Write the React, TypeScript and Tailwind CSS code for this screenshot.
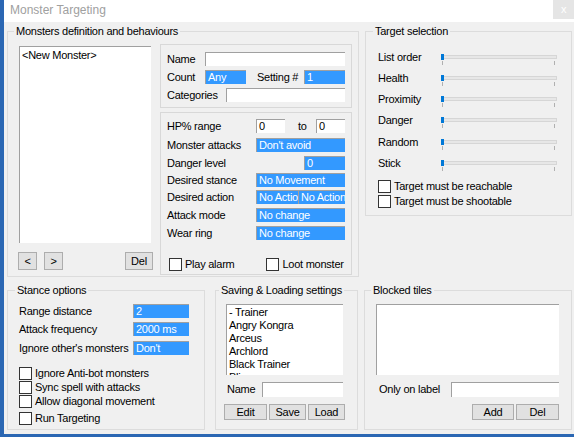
import React from 'react';

const Check: React.FC<{ label: string; className?: string }> = ({ label, className = '' }) => (
  <div className={`flex items-center ${className}`}>
    <span className="w-[13px] h-[13px] border border-[#333333] bg-white shrink-0" />
    <span className="ml-[3px] whitespace-nowrap">{label}</span>
  </div>
);

const Field: React.FC<{ w: string; children?: React.ReactNode; h?: string }> = ({ w, children, h = 'h-[14px]' }) => (
  <div className={`${w} ${h} bg-white border-t border-l border-[#a0a0a0] pl-[2px] leading-[13px] overflow-hidden whitespace-nowrap`}>
    {children}
  </div>
);

const Blue: React.FC<{ w: string; children?: React.ReactNode }> = ({ w, children }) => (
  <div className={`${w} h-[14px] bg-[#3399ff] text-white border-t border-l border-[#a0a0a0] pl-[2px] leading-[13px] overflow-hidden whitespace-nowrap shrink-0`}>
    {children}
  </div>
);

const Btn: React.FC<{ w: string; h?: string; children: React.ReactNode; className?: string }> = ({ w, h = 'h-[16px]', children, className = '' }) => (
  <div className={`${w} ${h} bg-[#e1e1e1] border border-[#adadad] flex items-center justify-center shrink-0 ${className}`}>
    {children}
  </div>
);

const Slider: React.FC<{ label: string; className?: string }> = ({ label, className = '' }) => (
  <div className={`h-[21px] flex items-center ${className}`}>
    <span className="w-[63px]">{label}</span>
    <div className="relative w-[116px] h-[12px] mt-[5px]">
      <div className="absolute left-0 right-0 top-[1px] h-[4px] bg-[#e7e7e7] border border-[#d6d6d6]" />
      <div className="absolute left-[0px] top-0 w-[3px] h-[6px] bg-[#0078d7]" />
      <div className="absolute left-[1px] top-[7px] w-px h-[4px] bg-[#b0b0b0]" />
      <div className="absolute right-[2px] top-[7px] w-px h-[4px] bg-[#b0b0b0]" />
    </div>
  </div>
);

const items = ['- Trainer', 'Angry Kongra', 'Arceus', 'Archlord', 'Black Trainer', 'Blissey'];

export default function App() {
  return (
    <div className="w-[574px] h-[437px] bg-[#2b67b3] flex overflow-hidden font-['Liberation_Sans',sans-serif] text-[11px] tracking-[-0.25px] text-black">
      <div className="ml-[4px] w-[570px] h-[434px] bg-[#f0f0f0] flex flex-col">
        <div className="h-[22px] bg-white flex items-start justify-between shrink-0">
          <span className="pl-[6px] pt-[3px] text-[12px] tracking-normal text-[#a0a0a0] leading-[15px]">Monster Targeting</span>
          <div className="w-[21px] h-[19px] bg-[#e5e5e5] text-white text-[11px] flex items-center justify-center">x</div>
        </div>

        <div className="pl-[3px] pt-[3px] flex flex-col">
          <div className="flex items-start gap-[6px]">
            <fieldset className="w-[352px] h-[252px] border border-[#dcdcdc]">
              <legend className="ml-[6px] px-[2px] leading-[13px]">Monsters definition and behaviours</legend>
              <div className="flex pl-[10px] pt-[6px]">
                <div className="w-[135px] flex flex-col">
                  <div className="ml-[1px] mt-[2px] w-[132px] h-[197px] bg-white border-t border-l border-[#a0a0a0] pl-[2px] pt-[2px] leading-[13px]">
                    &lt;New Monster&gt;
                  </div>
                  <div className="flex mt-[9px]">
                    <Btn w="w-[19px]" h="h-[18px]">&lt;</Btn>
                    <Btn w="w-[19px]" h="h-[18px]" className="ml-[7px]">&gt;</Btn>
                    <Btn w="w-[28px]" h="h-[18px]" className="ml-auto">Del</Btn>
                  </div>
                </div>
                <div className="ml-[7px] flex flex-col">
                  <div className="w-[192px] h-[64px] border border-[#d8d8d8] pt-[7px] px-[6px] flex flex-col">
                    <div className="flex items-center h-[14px]">
                      <span className="w-[38px]">Name</span>
                      <Field w="w-[140px]" />
                    </div>
                    <div className="flex items-center h-[14px] mt-[4px]">
                      <span className="w-[38px]">Count</span>
                      <Blue w="w-[41px]">Any</Blue>
                      <span className="ml-[11px]">Setting #</span>
                      <div className="ml-auto"><Blue w="w-[41px]">1</Blue></div>
                    </div>
                    <div className="flex items-center h-[14px] mt-[4px]">
                      <span className="w-[59px]">Categories</span>
                      <Field w="w-[119px]" />
                    </div>
                  </div>
                  <div className="w-[192px] h-[163px] mt-[4px] border border-[#d8d8d8] pt-[6px] px-[6px] flex flex-col">
                    <div className="flex items-center h-[14px]">
                      <span className="w-[89px]">HP% range</span>
                      <Field w="w-[29px]">0</Field>
                      <span className="ml-[13px]">to</span>
                      <div className="ml-auto"><Field w="w-[29px]">0</Field></div>
                    </div>
                    <div className="flex items-center h-[14px] mt-[5px]">
                      <span className="w-[89px]">Monster attacks</span>
                      <Blue w="w-[89px]">Don't avoid</Blue>
                    </div>
                    <div className="flex items-center h-[14px] mt-[4px]">
                      <span className="w-[89px]">Danger level</span>
                      <div className="ml-auto"><Blue w="w-[41px]">0</Blue></div>
                    </div>
                    <div className="flex items-center h-[14px] mt-[3px]">
                      <span className="w-[89px]">Desired stance</span>
                      <Blue w="w-[89px]">No Movement</Blue>
                    </div>
                    <div className="flex items-center h-[14px] mt-[3px]">
                      <span className="w-[89px]">Desired action</span>
                      <Blue w="w-[42px]">No Action</Blue>
                      <Blue w="w-[47px]">No Action</Blue>
                    </div>
                    <div className="flex items-center h-[14px] mt-[4px]">
                      <span className="w-[89px]">Attack mode</span>
                      <Blue w="w-[89px]">No change</Blue>
                    </div>
                    <div className="flex items-center h-[14px] mt-[4px]">
                      <span className="w-[89px]">Wear ring</span>
                      <Blue w="w-[89px]">No change</Blue>
                    </div>
                    <div className="flex items-center mt-[16px] pl-[2px]">
                      <Check label="Play alarm" />
                      <Check label="Loot monster" className="ml-[32px]" />
                    </div>
                  </div>
                </div>
              </div>
            </fieldset>

            <fieldset className="w-[207px] h-[191px] border border-[#dcdcdc]">
              <legend className="ml-[7px] px-[2px] leading-[13px]">Target selection</legend>
              <div className="pl-[12px] pt-[9px] flex flex-col">
                <Slider label="List order" />
                <Slider label="Health" />
                <Slider label="Proximity" />
                <Slider label="Danger" />
                <Slider label="Random" className="mt-[1px]" />
                <Slider label="Stick" />
                <div className="h-[15px] mt-[5px] flex items-center"><Check label="Target must be reachable" /></div>
                <div className="h-[15px] flex items-center"><Check label="Target must be shootable" /></div>
              </div>
            </fieldset>
          </div>

          <div className="flex items-start mt-[7px]">
            <fieldset className="w-[198px] h-[146px] border border-[#dcdcdc]">
              <legend className="ml-[7px] px-[2px] leading-[13px]">Stance options</legend>
              <div className="pl-[11px] pt-[7px] flex flex-col">
                <div className="flex items-center h-[14px]">
                  <span className="w-[114px]">Range distance</span>
                  <Blue w="w-[56px]">2</Blue>
                </div>
                <div className="flex items-center h-[14px] mt-[4px]">
                  <span className="w-[114px]">Attack frequency</span>
                  <Blue w="w-[56px]">2000 ms</Blue>
                </div>
                <div className="flex items-center h-[14px] mt-[5px]">
                  <span className="w-[114px] whitespace-nowrap">Ignore other's monsters</span>
                  <Blue w="w-[56px]">Don't</Blue>
                </div>
                <div className="h-[14px] mt-[11px] flex items-center"><Check label="Ignore Anti-bot monsters" /></div>
                <div className="h-[14px] flex items-center"><Check label="Sync spell with attacks" /></div>
                <div className="h-[14px] flex items-center"><Check label="Allow diagonal movement" /></div>
                <div className="h-[14px] mt-[3px] flex items-center"><Check label="Run Targeting" /></div>
              </div>
            </fieldset>

            <fieldset className="ml-[10px] w-[143px] h-[146px] border border-[#dcdcdc]">
              <legend className="ml-[3px] px-[2px] leading-[13px] whitespace-nowrap">Saving &amp; Loading settings</legend>
              <div className="pl-[8px] pt-[7px] flex flex-col">
                <div className="ml-[2px] w-[117px] h-[71px] bg-white border-t border-l border-[#a0a0a0] pl-[2px] pt-[1px] leading-[13px] overflow-hidden">
                  {items.map((it) => (
                    <div key={it} className="whitespace-nowrap">{it}</div>
                  ))}
                </div>
                <div className="flex items-center h-[15px] mt-[7px] ml-[3px]">
                  <span className="w-[35px]">Name</span>
                  <Field w="w-[81px]" h="h-[15px]" />
                </div>
                <div className="flex mt-[7px]">
                  <Btn w="w-[43px]">Edit</Btn>
                  <Btn w="w-[37px]" className="ml-[2px]">Save</Btn>
                  <Btn w="w-[37px]" className="ml-[2px]">Load</Btn>
                </div>
              </div>
            </fieldset>

            <fieldset className="ml-[6px] w-[207px] h-[146px] border border-[#dcdcdc]">
              <legend className="ml-[6px] px-[2px] leading-[13px]">Blocked tiles</legend>
              <div className="pl-[11px] pr-[12px] pt-[7px] flex flex-col">
                <div className="w-[183px] h-[71px] bg-white border-t border-l border-[#a0a0a0]" />
                <div className="flex items-center h-[15px] mt-[7px] ml-[3px]">
                  <span className="w-[72px]">Only on label</span>
                  <Field w="w-[108px]" h="h-[15px]" />
                </div>
                <div className="flex justify-end mt-[7px]">
                  <Btn w="w-[42px]">Add</Btn>
                  <Btn w="w-[43px]" className="ml-[2px]">Del</Btn>
                </div>
              </div>
            </fieldset>
          </div>
        </div>
      </div>
    </div>
  );
}
